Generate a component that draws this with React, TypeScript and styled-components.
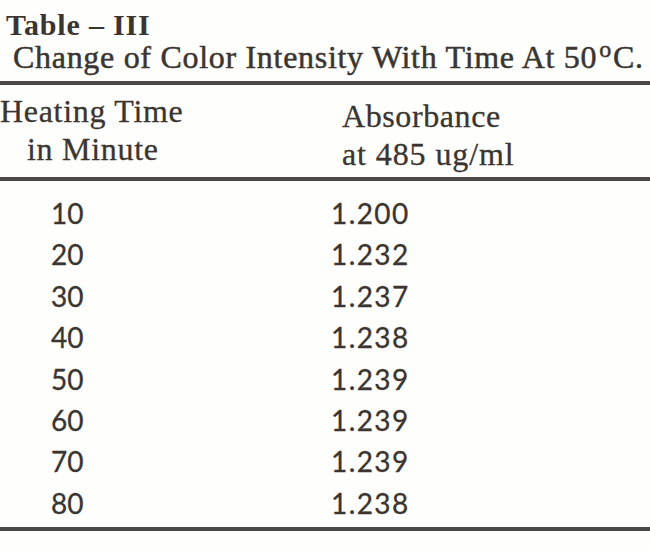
import React from "react";
import styled, { createGlobalStyle } from "styled-components";

const GlobalStyle = createGlobalStyle`
  html, body {
    margin: 0;
    padding: 0;
    background: #fefefc;
  }
  body {
    color: #3a3530;
    font-family: "Liberation Serif", "DejaVu Serif", serif;
  }
`;

const Page = styled.div`
  width: 650px;
  height: 551px;
  box-sizing: border-box;
  padding-top: 9px;
  overflow: hidden;
`;

const TableNumber = styled.div`
  padding-left: 6px;
  font-size: 30px;
  line-height: 32px;
  font-weight: bold;
  letter-spacing: 0.8px;
`;

const Caption = styled.div`
  padding-left: 13px;
  font-size: 32px;
  line-height: 32px;
  letter-spacing: 0.7px;
  white-space: nowrap;
  -webkit-text-stroke: 0.5px #3a3530;
`;

const Degree = styled.span`
  font-size: 24px;
  line-height: 0;
  vertical-align: 11px;
  margin: 0 1px 0 2px;
`;

const Rule = styled.div<{ $gap: number }>`
  margin-top: ${(p) => p.$gap}px;
  height: 4px;
  background: #3d3833;
  opacity: 0.92;
`;

const HeadRow = styled.div`
  display: grid;
  grid-template-columns: 342px 1fr;
  margin-top: 7px;
  font-size: 32px;
  line-height: 38px;
  -webkit-text-stroke: 0.3px #3a3530;
`;

const HeadCell = styled.div<{ $drop?: number }>`
  padding-top: ${(p) => p.$drop ?? 0}px;
`;

const HeadLine = styled.div<{ $indent?: number; $spacing?: number }>`
  padding-left: ${(p) => p.$indent ?? 0}px;
  letter-spacing: ${(p) => p.$spacing ?? 0.7}px;
  white-space: nowrap;
`;

const Body = styled.div`
  padding-top: 12px;
  font-family: Lato, "Noto Sans", sans-serif;
  font-size: 28px;
  line-height: 41.4px;
  -webkit-text-stroke: 0.3px #3a3530;
`;

const DataRow = styled.div`
  display: grid;
  grid-template-columns: 331px 1fr;
`;

const TimeCell = styled.div`
  padding-left: 51px;
`;

const ValueCell = styled.div`
  letter-spacing: 1.4px;
`;

const rows: [number, string][] = [
  [10, "1.200"],
  [20, "1.232"],
  [30, "1.237"],
  [40, "1.238"],
  [50, "1.239"],
  [60, "1.239"],
  [70, "1.239"],
  [80, "1.238"],
];

const App = () => {
  return (
    <Page>
      <GlobalStyle />
      <TableNumber>Table – III</TableNumber>
      <Caption>
        Change of Color Intensity With Time At 50<Degree>o</Degree>C.
      </Caption>
      <Rule $gap={8} />
      <HeadRow>
        <HeadCell>
          <HeadLine>Heating Time</HeadLine>
          <HeadLine $indent={27}>in Minute</HeadLine>
        </HeadCell>
        <HeadCell $drop={5}>
          <HeadLine $spacing={0.6}>Absorbance</HeadLine>
          <HeadLine $spacing={0.9}>at 485 ug/ml</HeadLine>
        </HeadCell>
      </HeadRow>
      <Rule $gap={4} />
      <Body>
        {rows.map(([time, value]) => (
          <DataRow key={time}>
            <TimeCell>{time}</TimeCell>
            <ValueCell>{value}</ValueCell>
          </DataRow>
        ))}
      </Body>
      <Rule $gap={3} />
    </Page>
  );
};

export default App;
